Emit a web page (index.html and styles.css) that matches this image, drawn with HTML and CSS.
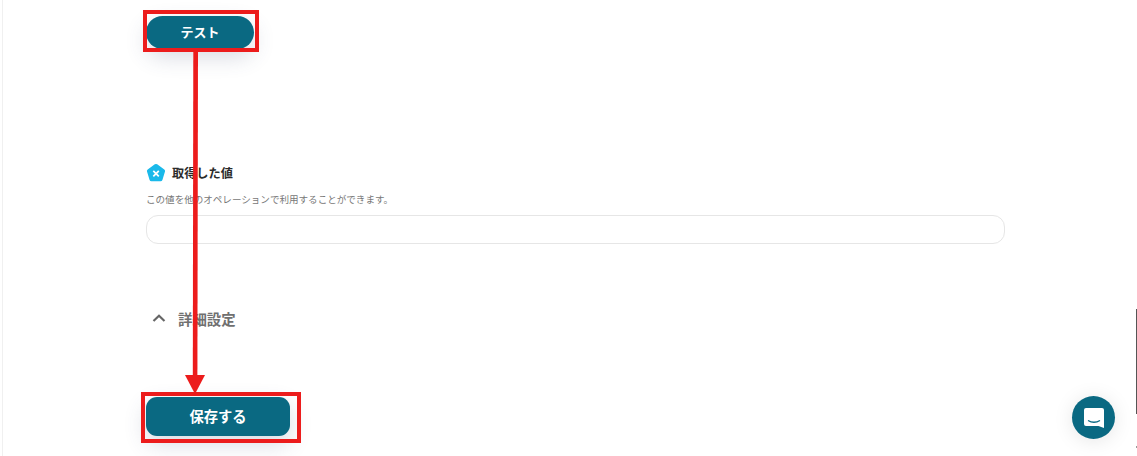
FILE: index.html
```html
<!DOCTYPE html>
<html lang="ja">
<head>
  <title>テスト</title>
  <meta charset="UTF-8"/>
  <link rel="stylesheet" href="styles.css">
</head>
<body>
  <div class="page">
    <button class="btn btn-test" type="button">テスト</button>

    <div class="result">
      <div class="result-title">
        <svg class="pentagon" width="20" height="20" viewBox="0 0 20 20">
          <path d="M8.800 1.300 Q10 0.500 11.200 1.300 L18.300 6.500 Q19.400 7.300 19 8.600 L16.400 17 Q16 18.300 14.600 18.300 L5.400 18.300 Q4 18.300 3.600 17 L1 8.600 Q0.600 7.300 1.700 6.500 Z" fill="#1ab9ea"/>
          <path d="M7.300 7.800 L12.800 13.400 M12.800 7.800 L7.300 13.400" stroke="#fff" stroke-width="1.700" fill="none"/>
        </svg>
        <span>取得した値</span>
      </div>
      <p class="result-note">この値を他のオペレーションで利用することができます。</p>
      <div class="result-box"></div>
    </div>

    <div class="detail">
      <svg class="chevron" width="16" height="10" viewBox="0 0 16 10">
        <path d="M2.500 8 L8 2.800 L13.500 8" stroke="#666" stroke-width="2.200" fill="none"/>
      </svg>
      <span>詳細設定</span>
    </div>

    <button class="btn btn-save" type="button">保存する</button>
  </div>

  <!-- annotations drawn over the screenshot -->
  <div class="mark mark-test"></div>
  <div class="mark mark-save"></div>
  <svg class="arrow" width="24" height="345" viewBox="0 0 24 345">
    <path d="M10.300 0 L15 0 L14.400 327 L9.800 327 Z" fill="#ec1c1c"/>
    <path d="M2 325 L22 325 L12 344 Z" fill="#ec1c1c"/>
  </svg>

  <div class="chat">
    <svg width="22" height="22" viewBox="0 0 22 22">
      <path d="M3 1 H19 Q21 1 21 3 V21 L15.500 19 H3 Q1 19 1 17 V3 Q1 1 3 1 Z" fill="#fff"/>
      <path d="M5 13.500 Q11 17 17 13.500" stroke="#0b6b85" stroke-width="1.300" fill="none"/>
    </svg>
  </div>
  <div class="edge edge-right"></div>
  <div class="edge edge-dot"></div>
</body>
</html>
```

FILE: styles.css
```css
html, body {
  margin: 0;
  height: 100%;
  background-color: #fff;
  font-family: "Noto Sans CJK JP", "Noto Sans", sans-serif;
  overflow: hidden;
}
.page {
  display: flex;
  flex-direction: column;
  align-items: flex-start;
  height: 456px;
  box-sizing: border-box;
  padding: 16px 0 0 146px;
  background: linear-gradient(to right, #fff 2px, #f0f0f0 2px, #f0f0f0 3px, #fff 3px);
}
.btn {
  border: none;
  background-color: #0a6982;
  color: #fff;
  font-family: inherit;
  font-weight: 700;
  padding: 0;
  cursor: pointer;
}
.btn-test {
  width: 108px;
  height: 33px;
  padding-bottom: 2px;
  font-size: 13px;
  border-radius: 17px;
  box-shadow: 0 8px 22px rgba(60, 70, 110, 0.2);
}
.btn-save {
  width: 144px;
  height: 39px;
  margin-top: 69px;
  padding-bottom: 3px;
  font-size: 14.300px;
  border-radius: 11px;
  box-shadow: 0 8px 22px rgba(60, 70, 110, 0.2);
}
.result {
  margin-top: 114px;
  width: 859px;
}
.result-title {
  display: flex;
  align-items: center;
  gap: 6px;
  height: 20px;
  font-size: 12.200px;
  font-weight: 700;
  color: #2b2b2b;
}
.result-note {
  margin: 9px 0 0 0;
  font-size: 9.550px;
  line-height: 14px;
  color: #777;
}
.result-box {
  margin-top: 9px;
  height: 27px;
  border: 1px solid #e6e6e6;
  border-radius: 12px;
}
.detail {
  display: flex;
  align-items: center;
  gap: 11px;
  margin: 64px 0 0 5px;
  height: 20px;
  font-size: 14.400px;
  font-weight: 700;
  color: #707070;
}
.mark {
  position: absolute;
  box-sizing: border-box;
  border: 4px solid #ec1c1c;
}
.mark-test {
  left: 143px;
  top: 10px;
  width: 116px;
  height: 42px;
}
.mark-save {
  left: 141px;
  top: 392px;
  width: 160px;
  height: 51px;
}
.arrow {
  position: absolute;
  left: 183px;
  top: 50px;
}
.chat {
  position: absolute;
  left: 1072px;
  top: 396px;
  width: 43px;
  height: 43px;
  border-radius: 50%;
  background-color: #0a6982;
  box-shadow: 0 2px 20px rgba(0, 0, 0, 0.1);
  display: flex;
  align-items: center;
  justify-content: center;
}
.edge {
  position: absolute;
  left: 1136px;
  width: 1px;
  background-color: #555;
}
.edge-right {
  top: 309px;
  height: 105px;
}
.edge-dot {
  top: 446px;
  height: 2px;
  background-color: #999;
}
```
